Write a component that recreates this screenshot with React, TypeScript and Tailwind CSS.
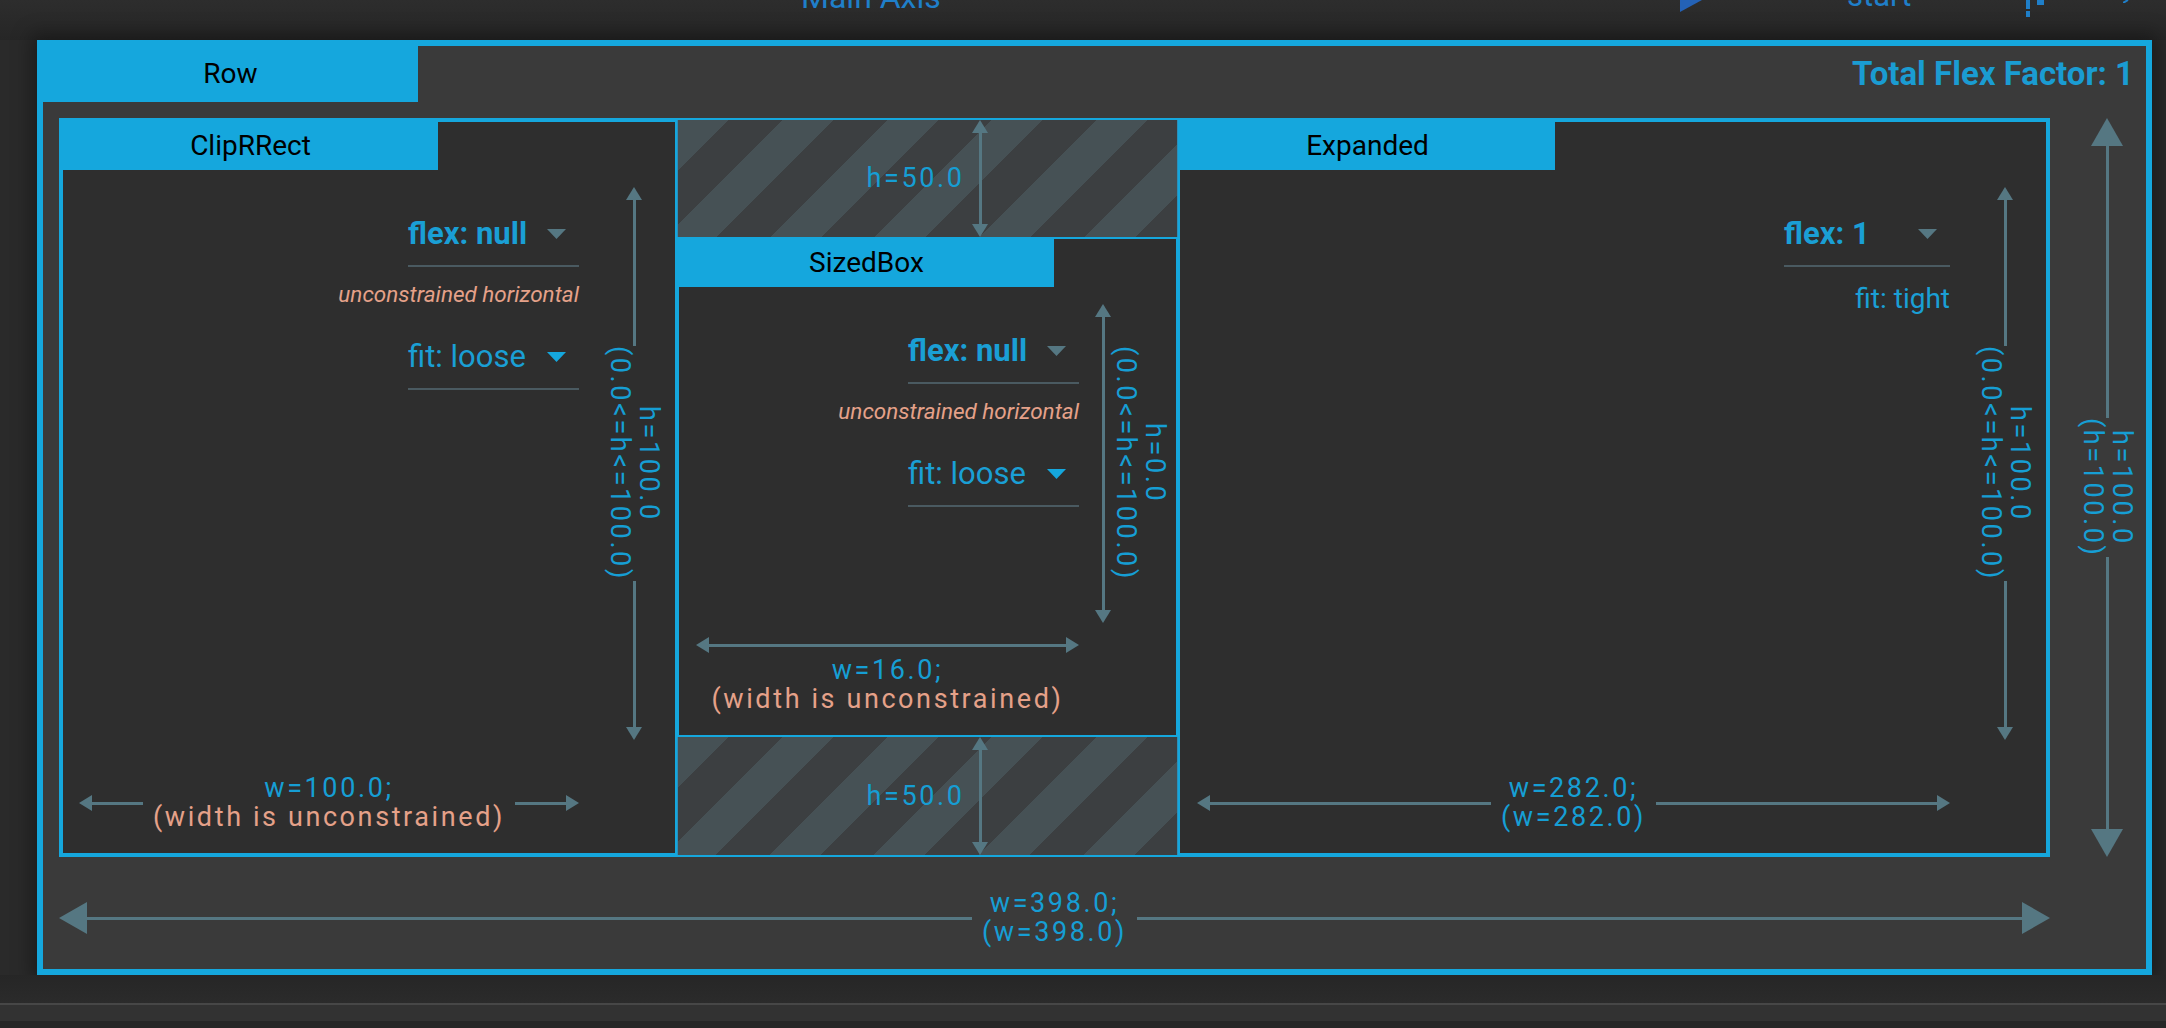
import React from 'react'
import clsx from 'clsx'

type Dir = 'up' | 'down' | 'left' | 'right'

// arrow heads of the dimension arrows
function Head({ dir, big }: { dir: Dir; big?: boolean }) {
  const vertical = dir === 'up' || dir === 'down'
  const across = big ? 32 : 16
  const along = big ? 28 : 13
  const w = vertical ? across : along
  const h = vertical ? along : across
  let pts = ''
  if (dir === 'up') pts = `0,${h} ${w / 2},0 ${w},${h}`
  if (dir === 'down') pts = `0,0 ${w},0 ${w / 2},${h}`
  if (dir === 'left') pts = `${w},0 0,${h / 2} ${w},${h}`
  if (dir === 'right') pts = `0,0 ${w},${h / 2} 0,${h}`
  return (
    <svg width={w} height={h} viewBox={`0 0 ${w} ${h}`} className="block shrink-0">
      <polygon points={pts} fill="#557782" />
    </svg>
  )
}

function Dim({ children, salmon }: { children: React.ReactNode; salmon?: boolean }) {
  return (
    <div
      className={clsx(
        "whitespace-nowrap text-center font-['Roboto'] text-[27px] leading-[29px] tracking-[2.6px]",
        salmon ? 'text-[#e5a189]' : 'text-[#169ed4]'
      )}
    >
      {children}
    </div>
  )
}

function VArrow({ big, lines }: { big?: boolean; lines?: React.ReactNode }) {
  return (
    <div className="flex flex-1 flex-col items-center">
      <Head dir="up" big={big} />
      <div className="w-[3px] flex-1 bg-[#557782]" />
      {lines && (
        <>
          <div className="shrink-0 py-[16px] [writing-mode:vertical-rl]">{lines}</div>
          <div className="w-[3px] flex-1 bg-[#557782]" />
        </>
      )}
      <Head dir="down" big={big} />
    </div>
  )
}

function HArrow({ big, children }: { big?: boolean; children?: React.ReactNode }) {
  return (
    <div className="flex items-center">
      <Head dir="left" big={big} />
      <div className="h-[3px] flex-1 bg-[#557782]" />
      {children && (
        <>
          <div className="px-[10px]">{children}</div>
          <div className="h-[3px] flex-1 bg-[#557782]" />
        </>
      )}
      <Head dir="right" big={big} />
    </div>
  )
}

function Drop({ label, bold, muted, narrow }: { label: string; bold?: boolean; muted?: boolean; narrow?: boolean }) {
  return (
    <div
      className={clsx(
        'flex items-center justify-between border-b-2 border-[#4a5a61] pb-[15px] pr-[13px]',
        narrow ? 'w-[166px]' : 'w-[171px]'
      )}
    >
      <span className={clsx('text-[31px] leading-[32px] text-[#1a9fd5]', bold && 'font-bold')}>{label}</span>
      <svg width="19" height="10" className="block">
        <polygon points="0,0 19,0 9.5,10" fill={muted ? '#557782' : '#15a7dd'} />
      </svg>
    </div>
  )
}

function Tag({ children }: { children: React.ReactNode }) {
  return (
    <div className="flex h-[48px] w-[375px] shrink-0 items-center justify-center bg-[#15a7dd] text-[28px] text-black">
      {children}
    </div>
  )
}

function LooseProps() {
  return (
    <div className="flex flex-1 flex-col items-end pt-[48px]">
      <Drop label="flex: null" bold muted />
      <div className="mt-[13px] text-[22.5px] italic leading-[28px] text-[#e5a189]">unconstrained horizontal</div>
      <div className="mt-[33px]">
        <Drop label="fit: loose" />
      </div>
    </div>
  )
}

function Hatch({ className }: { className?: string }) {
  return (
    <div
      className={clsx(
        'flex justify-center gap-[8px] border-x border-[#2b8fba] bg-[repeating-linear-gradient(135deg,#465155_0px,#465155_36px,#3c3f41_36px,#3c3f41_74px)]',
        className
      )}
    >
      <div className="self-center">
        <Dim>h=50.0</Dim>
      </div>
      <div className="flex w-[16px] flex-col items-center">
        <VArrow />
      </div>
    </div>
  )
}

function ClipRRectBox() {
  return (
    <div className="flex w-[616px] shrink-0 flex-col border-2 border-[#15a7dd]">
      <Tag>ClipRRect</Tag>
      <div className="flex flex-1">
        <div className="flex flex-1 flex-col pl-[16px] pr-[14px]">
          <LooseProps />
          <div className="pb-[21px]">
            <HArrow>
              <Dim>w=100.0;</Dim>
              <Dim salmon>(width is unconstrained)</Dim>
            </HArrow>
          </div>
        </div>
        <div className="flex w-[82px] flex-col items-center pb-[113px] pt-[17px]">
          <VArrow
            lines={
              <>
                <Dim>h=100.0</Dim>
                <Dim>(0.0&lt;=h&lt;=100.0)</Dim>
              </>
            }
          />
        </div>
      </div>
    </div>
  )
}

function SizedBoxColumn() {
  return (
    <div className="flex w-[501px] shrink-0 flex-col">
      <Hatch className="h-[117px]" />
      <div className="flex h-[500px] flex-col border-2 border-[#15a7dd]">
        <Tag>SizedBox</Tag>
        <div className="flex flex-1">
          <div className="flex flex-1 flex-col pl-[17px] pr-[16px]">
            <LooseProps />
            <div className="pb-[21px]">
              <HArrow />
              <div className="mt-[3px]">
                <Dim>w=16.0;</Dim>
                <Dim salmon>(width is unconstrained)</Dim>
              </div>
            </div>
          </div>
          <div className="flex pb-[112px] pr-[7px] pt-[17px]">
            <div className="flex w-[16px] flex-col items-center">
              <VArrow />
            </div>
            <div className="self-center [writing-mode:vertical-rl]">
              <Dim>h=0.0</Dim>
              <Dim>(0.0&lt;=h&lt;=100.0)</Dim>
            </div>
          </div>
        </div>
      </div>
      <Hatch className="flex-1" />
    </div>
  )
}

function ExpandedBox() {
  return (
    <div className="flex flex-1 flex-col border-2 border-[#15a7dd]">
      <Tag>Expanded</Tag>
      <div className="flex flex-1">
        <div className="flex flex-1 flex-col pl-[17px] pr-[14px]">
          <div className="flex flex-1 flex-col items-end pt-[48px]">
            <Drop label="flex: 1" bold muted narrow />
            <div className="mt-[18px] text-[28px] leading-[28px] text-[#1a9fd5]">fit: tight</div>
          </div>
          <div className="pb-[21px]">
            <HArrow>
              <Dim>w=282.0;</Dim>
              <Dim>(w=282.0)</Dim>
            </HArrow>
          </div>
        </div>
        <div className="flex w-[82px] flex-col items-center pb-[113px] pt-[17px]">
          <VArrow
            lines={
              <>
                <Dim>h=100.0</Dim>
                <Dim>(0.0&lt;=h&lt;=100.0)</Dim>
              </>
            }
          />
        </div>
      </div>
    </div>
  )
}

function TopStrip() {
  return (
    <div className="flex h-[40px] shrink-0 items-start bg-gradient-to-b from-[#2d2d2d] to-[#262626]">
      <div className="w-[1680px] shrink-0 pl-[801px]">
        <div className="-mt-[19px] text-[32px] leading-[32px] text-[#1f7fc9]">Main Axis</div>
      </div>
      <svg width="22" height="12" className="block shrink-0">
        <polygon points="0,0 22,0 0,12" fill="#2462b6" />
      </svg>
      <div className="w-[324px] shrink-0 pl-[145px]">
        <div className="-mt-[20px] text-[31px] leading-[32px] text-[#1f7fc9]">start</div>
      </div>
      <svg width="18" height="17" className="block shrink-0">
        <rect x="0" y="0" width="4" height="9" fill="#1f7fc9" />
        <rect x="0" y="11" width="4" height="6" fill="#1f7fc9" />
        <rect x="11" y="0" width="7" height="5" fill="#1f7fc9" />
      </svg>
      <svg width="6" height="3" className="ml-[79px] block shrink-0">
        <line x1="0" y1="3" x2="5" y2="0" stroke="#1f7fc9" strokeWidth="2" />
      </svg>
    </div>
  )
}

export default function App() {
  return (
    <div className="flex h-[1028px] w-[2166px] flex-col overflow-hidden bg-[#2a2a2a] font-['Roboto',sans-serif]">
      <TopStrip />
      <div className="flex shrink-0 pl-[37px]">
        <div className="flex h-[935px] w-[2115px] flex-col border-[6px] border-[#15a7dd] bg-[#3a3a3a] shadow-[0_0_18px_6px_rgba(0,0,0,0.35)]">
          <div className="flex h-[56px] shrink-0 items-start justify-between">
            <div className="flex h-[56px] w-[375px] items-center justify-center bg-[#15a7dd] text-[28px] text-black">
              Row
            </div>
            <div className="self-center pr-[12px] text-[33px] font-bold leading-[40px] text-[#1a9cd2]">
              Total Flex Factor: 1
            </div>
          </div>
          <div className="mt-[16px] flex pl-[16px]">
            <div className="flex h-[739px] w-[1991px] shrink-0 border-2 border-[#15a7dd] bg-[#2e2e2e]">
              <ClipRRectBox />
              <SizedBoxColumn />
              <ExpandedBox />
            </div>
            <div className="flex flex-1 flex-col items-center pl-[12px]">
              <VArrow
                big
                lines={
                  <>
                    <Dim>h=100.0</Dim>
                    <Dim>(h=100.0)</Dim>
                  </>
                }
              />
            </div>
          </div>
          <div className="pl-[16px] pt-[32px]">
            <div className="w-[1991px]">
              <HArrow big>
                <Dim>w=398.0;</Dim>
                <Dim>(w=398.0)</Dim>
              </HArrow>
            </div>
          </div>
        </div>
      </div>
      <div className="h-[28px] shrink-0 bg-gradient-to-b from-[#262626] to-[#2b2b2b]" />
      <div className="h-[2px] shrink-0 bg-[#474747]" />
      <div className="h-[16px] shrink-0 bg-[#323232]" />
      <div className="flex-1 bg-[#262626]" />
    </div>
  )
}
